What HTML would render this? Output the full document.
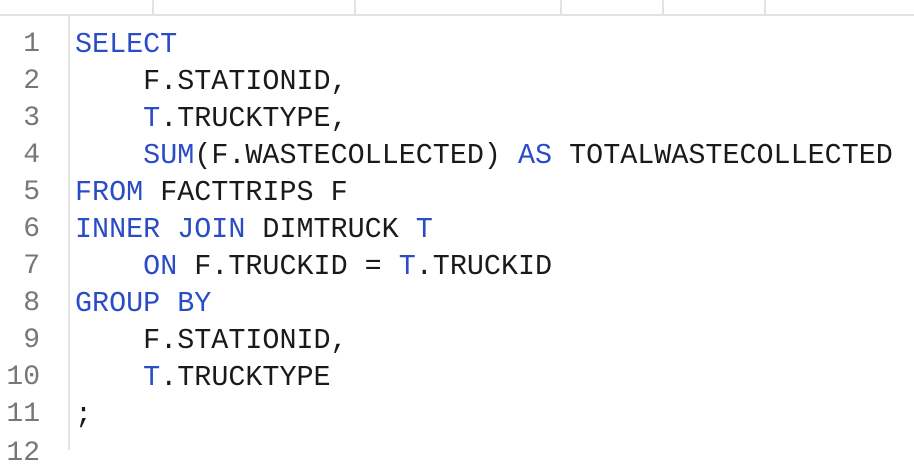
<!DOCTYPE html>
<html><head><style>
body{margin:0;width:914px;height:450px;overflow:hidden;background:#fff;position:relative;font-family:"Liberation Mono",monospace;}
.hdr{position:absolute;left:0;top:0;width:914px;height:14px;border-bottom:2px solid #e3e3e3;}
.hdr div{position:absolute;top:0;width:2px;height:14px;background:#e3e3e3;}
.gut{position:absolute;left:68px;top:16px;width:2px;height:434px;background:#e3e3e3;}
.ln{position:absolute;left:0;width:40px;text-align:right;color:#777;font-size:28px;}
.code{position:absolute;left:75px;font-size:28.4px;color:#1a1a1a;white-space:pre;}
.k{color:#2a4dc6;}
</style></head><body>
<div class="hdr"><div style="left:152px"></div><div style="left:354px"></div><div style="left:560px"></div><div style="left:662px"></div><div style="left:764px"></div></div>
<div class="gut"></div>
<div style="position:absolute;top:26px;left:0;line-height:37px">
<div class="ln" style="top:0">1</div>
<div class="ln" style="top:37px">2</div>
<div class="ln" style="top:74px">3</div>
<div class="ln" style="top:111px">4</div>
<div class="ln" style="top:148px">5</div>
<div class="ln" style="top:185px">6</div>
<div class="ln" style="top:222px">7</div>
<div class="ln" style="top:259px">8</div>
<div class="ln" style="top:296px">9</div>
<div class="ln" style="top:333px">10</div>
<div class="ln" style="top:370px">11</div>
<div class="ln" style="top:409px">12</div>
<div class="code" style="top:0;left:75px"><span class="k">SELECT</span>
    F.STATIONID,
    <span class="k">T</span>.TRUCKTYPE,
    <span class="k">SUM</span>(F.WASTECOLLECTED) <span class="k">AS</span> TOTALWASTECOLLECTED
<span class="k">FROM</span> FACTTRIPS F
<span class="k">INNER JOIN</span> DIMTRUCK <span class="k">T</span>
    <span class="k">ON</span> F.TRUCKID = <span class="k">T</span>.TRUCKID
<span class="k">GROUP BY</span>
    F.STATIONID,
    <span class="k">T</span>.TRUCKTYPE
;</div>
</div>
</body></html>
